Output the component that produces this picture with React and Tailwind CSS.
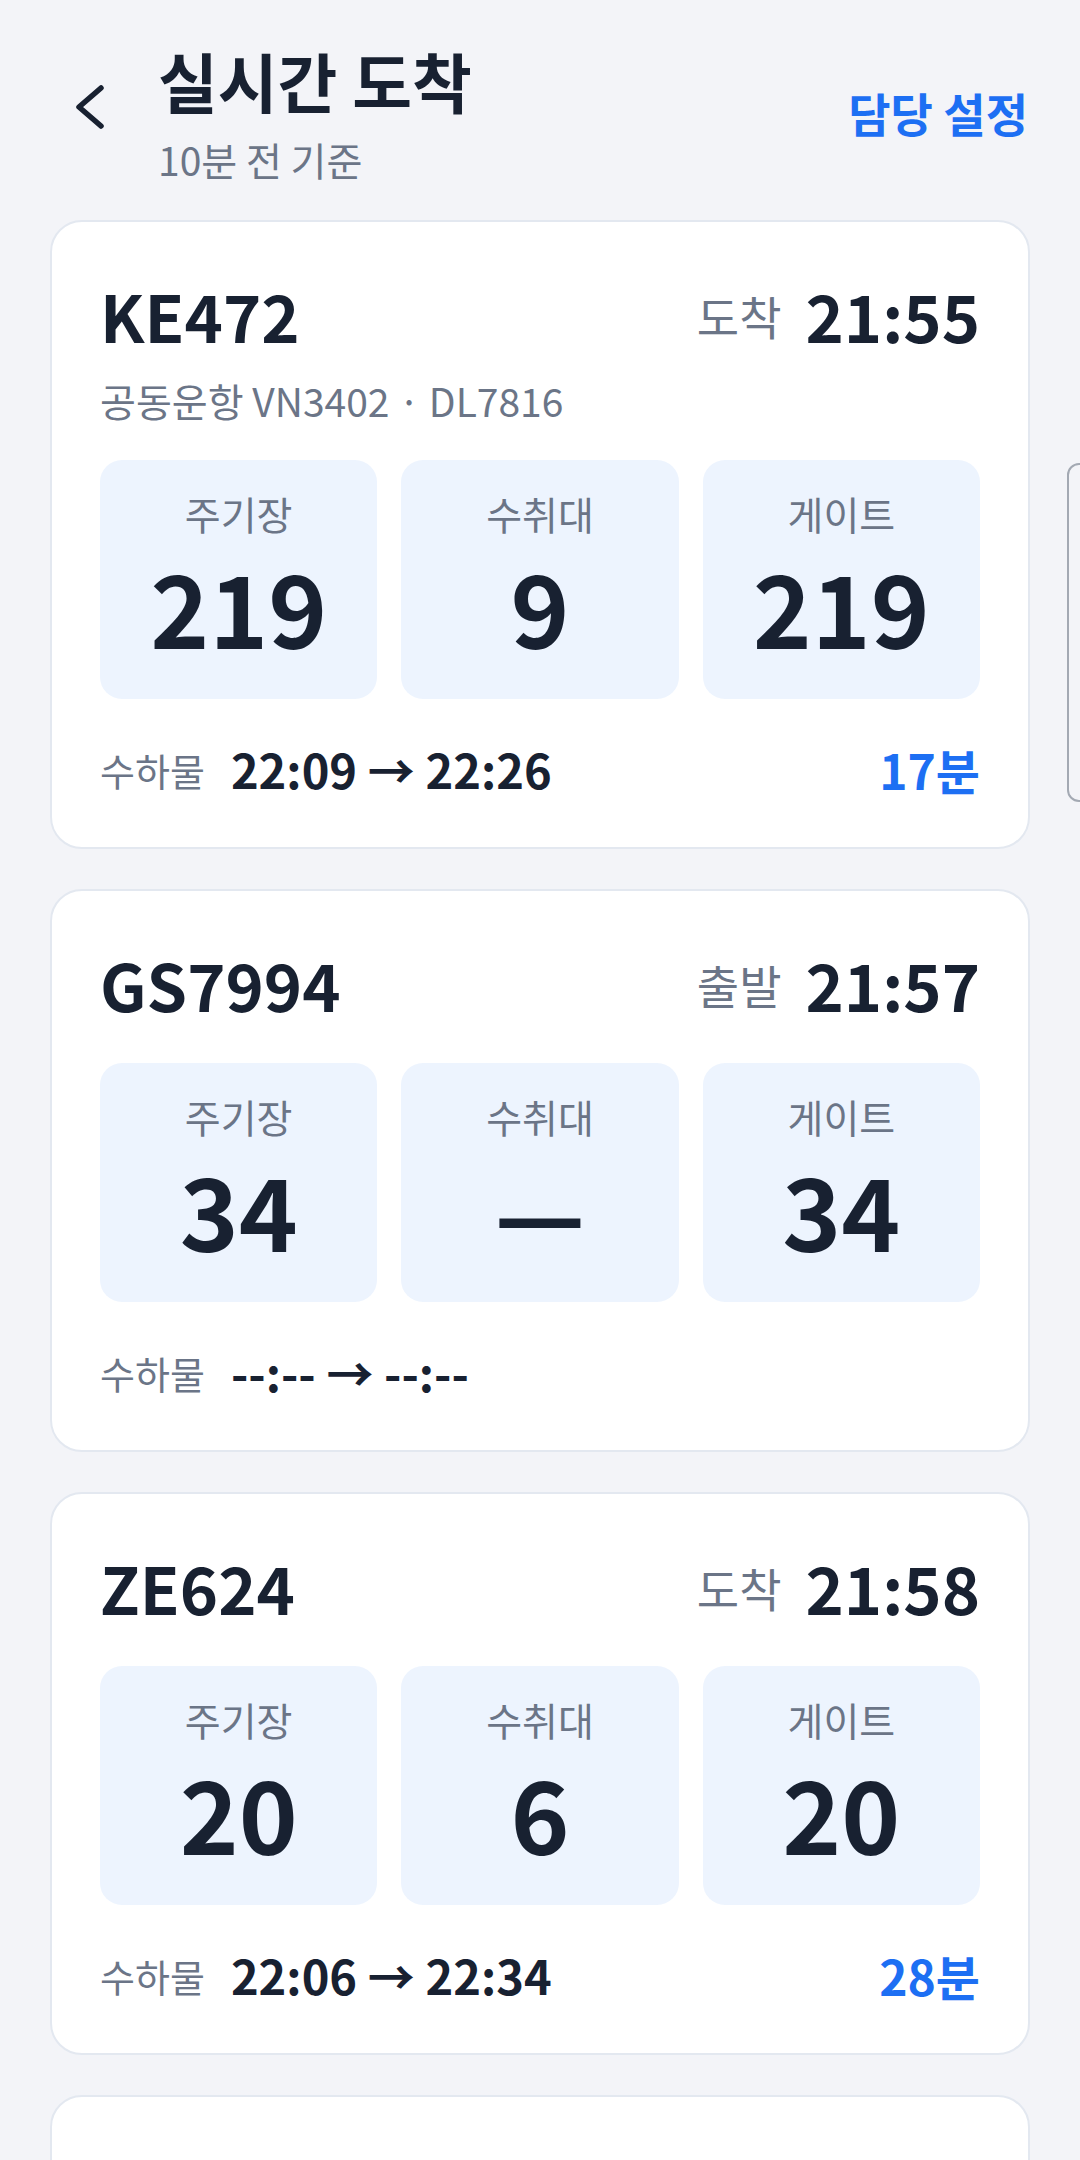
import React from 'react';

const flights = [
  {
    code: 'KE472', kind: '도착', time: '21:55',
    codeshare: '공동운항 VN3402 · DL7816',
    stand: '219', belt: '9', gate: '219',
    bag: '22:09 → 22:26', wait: '17분',
  },
  {
    code: 'GS7994', kind: '출발', time: '21:57',
    stand: '34', belt: '—', gate: '34',
    bag: '--:-- → --:--',
  },
  {
    code: 'ZE624', kind: '도착', time: '21:58',
    stand: '20', belt: '6', gate: '20',
    bag: '22:06 → 22:34', wait: '28분',
  },
  {
    code: 'OZ108', kind: '도착', time: '22:03',
    stand: '112', belt: '4', gate: '112',
    bag: '22:15 → 22:31', wait: '16분',
  },
];

function Tile({ label, value }) {
  return (
    <div className="h-[239px] rounded-[22px] bg-[#edf4fe] flex flex-col items-center pt-[30px]">
      <div className="text-[39px] leading-[46px] text-[#6b7587]">{label}</div>
      <div className="mt-[12px] text-[100px] leading-[115px] font-bold text-[#182131]">{value}</div>
    </div>
  );
}

function FlightCard({ f }) {
  return (
    <div className="bg-white border-2 border-[#e3e8f0] rounded-[32px] px-[48px] pt-[53px] pb-[48px]">
      <div className="flex items-center justify-between h-[80px]">
        <div className="text-[65px] leading-[80px] font-bold text-[#182131]">{f.code}</div>
        <div className="flex items-center gap-[24px]">
          <span className="text-[46px] text-[#6b7587]">{f.kind}</span>
          <span className="text-[65px] leading-[80px] font-bold text-[#182131]">{f.time}</span>
        </div>
      </div>
      {f.codeshare && (
        <div className="mt-[22px] text-[39px] leading-[46px] text-[#6b7587]">{f.codeshare}</div>
      )}
      <div className={`${f.codeshare ? 'mt-[37px]' : 'mt-[39px]'} grid grid-cols-3 gap-[24px]`}>
        <Tile label="주기장" value={f.stand} />
        <Tile label="수취대" value={f.belt} />
        <Tile label="게이트" value={f.gate} />
      </div>
      <div className="mt-[40px] h-[60px] flex items-center justify-between">
        <div className="flex items-center gap-[26px]">
          <span className="text-[38px] text-[#6b7587]">수하물</span>
          <span className="text-[47px] font-bold text-[#182131]">{f.bag}</span>
        </div>
        {f.wait && <span className="text-[48px] font-bold text-[#1d6ff3]">{f.wait}</span>}
      </div>
    </div>
  );
}

export default function App() {
  return (
    <div
      className="relative w-[1080px] h-[2160px] overflow-hidden bg-[#f3f4f8]"
      style={{ fontFamily: '"Noto Sans CJK KR", "Noto Sans", sans-serif' }}
    >
      {/* Header */}
      <div className="flex items-center justify-between pl-[74px] pr-[52px] pt-[42px]">
        <div className="flex items-center">
          <button className="w-[84px] h-[60px] -mt-[10px] flex items-center">
            <svg width="32" height="44" viewBox="0 0 32 44" fill="none">
              <path d="M27 3 L5 22 L27 41" stroke="#182131" strokeWidth="5.5" strokeLinecap="round" strokeLinejoin="round" />
            </svg>
          </button>
          <div>
            <div className="text-[65px] leading-[76px] font-bold text-[#182131]">실시간 도착</div>
            <div className="mt-[18px] text-[39px] leading-[46px] text-[#6b7587]">10분 전 기준</div>
          </div>
        </div>
        <button className="text-[46px] font-bold text-[#1d6ff3]">담당 설정</button>
      </div>

      {/* Cards */}
      <div className="px-[50px] mt-[38px] flex flex-col gap-[40px]">
        {flights.map(f => (
          <FlightCard key={f.code} f={f} />
        ))}
      </div>

      {/* edge handle */}
      <div className="absolute left-[1067px] top-[463px] w-[40px] h-[339px] rounded-[12px] border-2 border-[#a3a9b3] bg-[#f3f4f8]" />
    </div>
  );
}
